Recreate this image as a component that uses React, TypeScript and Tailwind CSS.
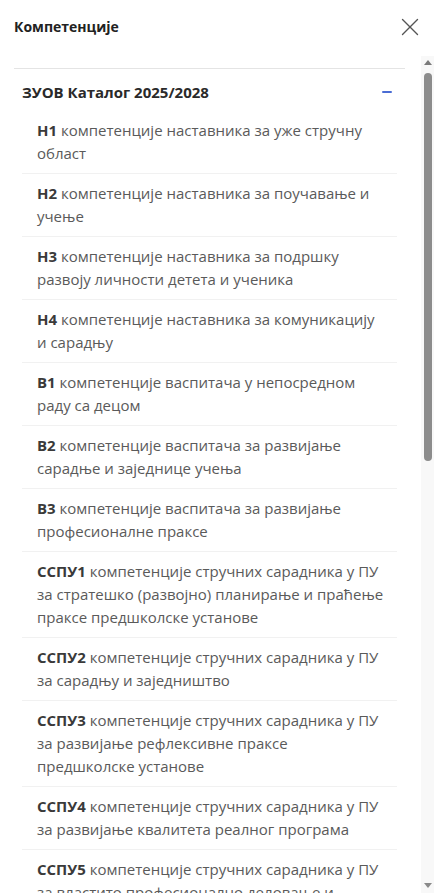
import { X } from "lucide-react";

type Item = { code: string; text: string };

const items: Item[] = [
  { code: "Н1", text: "компетенције наставника за уже стручну област" },
  { code: "Н2", text: "компетенције наставника за поучавање и учење" },
  { code: "Н3", text: "компетенције наставника за подршку развоју личности детета и ученика" },
  { code: "Н4", text: "компетенције наставника за комуникацију и сарадњу" },
  { code: "В1", text: "компетенције васпитача у непосредном раду са децом" },
  { code: "В2", text: "компетенције васпитача за развијање сарадње и заједнице учења" },
  { code: "В3", text: "компетенције васпитача за развијање професионалне праксе" },
  { code: "ССПУ1", text: "компетенције стручних сарадника у ПУ за стратешко (развојно) планирање и праћење праксе предшколске установе" },
  { code: "ССПУ2", text: "компетенције стручних сарадника у ПУ за сарадњу и заједништво" },
  { code: "ССПУ3", text: "компетенције стручних сарадника у ПУ за развијање рефлексивне праксе предшколске установе" },
  { code: "ССПУ4", text: "компетенције стручних сарадника у ПУ за развијање квалитета реалног програма" },
  { code: "ССПУ5", text: "компетенције стручних сарадника у ПУ за властито професионално деловање и професионални развој" },
];

export default function App() {
  return (
    <div
      className="h-[893px] w-[434px] bg-white flex flex-col overflow-hidden"
      style={{ fontFamily: '"Open Sans", "Noto Sans", sans-serif' }}
    >
      {/* header */}
      <div className="flex items-center justify-between pl-[14px] pr-[9px] h-[56px] shrink-0">
        <h2 className="text-[14px] font-bold text-[#222] -mt-[4px]">Компетенције</h2>
        <button className="text-[#555] -mt-[2px]">
          <X size={30} strokeWidth={1.1} />
        </button>
      </div>

      {/* list + scrollbar */}
      <div className="flex flex-1 min-h-0">
        <div className="flex-1 overflow-hidden pl-[14px] pr-[16px] pt-[12px]">
          <div className="border-t border-[#e4e4e4]">
            <div className="flex items-center justify-between pl-[8px] pr-[13px] pt-[12px] pb-[8px]">
              <span className="text-[15px] leading-[22px] font-bold text-[#2a2a2a]">ЗУОВ Каталог 2025/2028</span>
              <span className="block w-[10px] h-[2px] bg-[#4a6cd4] rounded" />
            </div>
            <ul className="mx-[8px]">
              {items.map((it, i) => (
                <li
                  key={it.code}
                  className={
                    "pl-[15px] pr-[10px] py-[8px] text-[15px] leading-[23px] text-[#5a5a5a] " +
                    (i > 0 ? "border-t border-[#f1f1f1]" : "")
                  }
                >
                  <span className="font-bold text-[#3a3a3a]">{it.code}</span> {it.text}
                </li>
              ))}
            </ul>
          </div>
        </div>

        {/* scrollbar */}
        <div className="w-[13px] shrink-0 bg-[#f8f8f8] flex flex-col items-center pt-[4px] pb-[5px]">
          <span className="w-0 h-0 border-x-[4px] border-x-transparent border-b-[5px] border-b-[#7a7a7a]" />
          <span className="mt-[8px] w-[8px] h-[388px] rounded-full bg-[#8c8c8c]" />
          <span className="flex-1" />
          <span className="w-0 h-0 border-x-[4px] border-x-transparent border-t-[5px] border-t-[#8a8a8a]" />
        </div>
      </div>
    </div>
  );
}
